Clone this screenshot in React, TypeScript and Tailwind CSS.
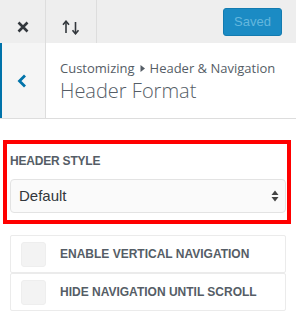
import React from 'react';

const sans = { fontFamily: '"Liberation Sans", Arial, sans-serif' };

const CloseIcon = () => (
  <svg width="12" height="12" viewBox="0 0 12 12">
    <path d="M1.5 1.5 L10.5 10.5 M10.5 1.5 L1.5 10.5" stroke="#32373c" strokeWidth="2.6" />
  </svg>
);

const SortIcon = () => (
  <svg width="18" height="15" viewBox="0 0 18 15">
    <path d="M4 13 V2" stroke="#32373c" strokeWidth="1.6" />
    <path d="M1 4.8 L4 1.2 L7 4.8" fill="none" stroke="#32373c" strokeWidth="1.6" />
    <path d="M13.5 2 V13.5" stroke="#32373c" strokeWidth="1.6" />
    <path d="M10.5 10.2 L13.5 13.8 L16.5 10.2" fill="none" stroke="#32373c" strokeWidth="1.6" />
  </svg>
);

const Row: React.FC<{ label: string }> = ({ label }) => (
  <div className="h-[38px] border border-[#ebebeb] rounded-[2px] bg-white flex items-center pl-[10px]">
    <span className="w-[25px] h-[25px] rounded-[3px] bg-[#f3f3f3] border border-[#eeeeee]" />
    <span className="ml-[14px] text-[12px] font-bold text-[#555d66]" style={sans}>
      {label}
    </span>
  </div>
);

export default function App() {
  return (
    <div
      className="w-[296px] h-[321px] bg-white overflow-hidden"
      style={{ fontFamily: '"Open Sans", sans-serif' }}
    >
      {/* top actions */}
      <div className="h-[43px] bg-[#eeeeee] flex">
        <div className="w-[46px] border-r border-[#dddddd] flex justify-center pt-[21px]">
          <CloseIcon />
        </div>
        <div className="w-[51px] border-r border-[#dddddd] flex justify-center pt-[20px]">
          <SortIcon />
        </div>
        <div className="flex-1 flex justify-end pr-[14px] pt-[8px]">
          <div
            className="w-[59px] h-[28px] rounded-[3px] bg-[#1b8bc4] border border-[#137bb0] flex items-center justify-center text-[13px] text-[#64b7de]"
            style={sans}
          >
            Saved
          </div>
        </div>
      </div>

      {/* section header */}
      <div className="h-[76px] flex border-b border-[#dddddd]">
        <div className="w-[46px] bg-[#f5f5f5] border-l-2 border-[#0073aa] border-r border-r-[#dddddd] flex items-center justify-center pr-[3px]">
          <svg width="10" height="14" viewBox="0 0 10 14">
            <path d="M8 1.5 L2.5 7 L8 12.5" fill="none" stroke="#0073aa" strokeWidth="2.8" />
          </svg>
        </div>
        <div className="pl-[14px] pt-[16px] text-[#555d66]">
          <div className="text-[13px] leading-[18px] flex items-center">
            Customizing
            <svg width="9" height="9" viewBox="0 0 9 9" className="mx-[3px]">
              <path d="M2.5 1 L7 4.5 L2.5 8 Z" fill="#555d66" />
            </svg>
            Header &amp; Navigation
          </div>
          <div className="text-[20px] leading-[26px] mt-[1px] font-light">Header Format</div>
        </div>
      </div>

      {/* controls */}
      <div className="px-[10px] pt-[21px]">
        <div className="-ml-[7px] -mr-[5px] border-4 border-[#ff0000] pl-[3px] pr-[1px] pt-[9px] pb-[7px]">
          <div className="text-[12px] font-bold text-[#555d66] leading-[16px] tracking-[-0.2px]" style={sans}>
            HEADER STYLE
          </div>
          <div
            className="mt-[10px] h-[34px] rounded-[4px] border border-[#e3e3e3] bg-[#fafafa] flex items-center justify-between pl-[8px] pr-[6px] text-[15px] text-[#32373c]"
            style={sans}
          >
            Default
            <svg width="8" height="12" viewBox="0 0 8 12">
              <path d="M4 0.5 L7.5 5 H0.5 Z M4 11.5 L7.5 7 H0.5 Z" fill="#444" />
            </svg>
          </div>
        </div>

        <div className="mt-[11px]">
          <Row label="ENABLE VERTICAL NAVIGATION" />
          <Row label="HIDE NAVIGATION UNTIL SCROLL" />
        </div>
      </div>
    </div>
  );
}
